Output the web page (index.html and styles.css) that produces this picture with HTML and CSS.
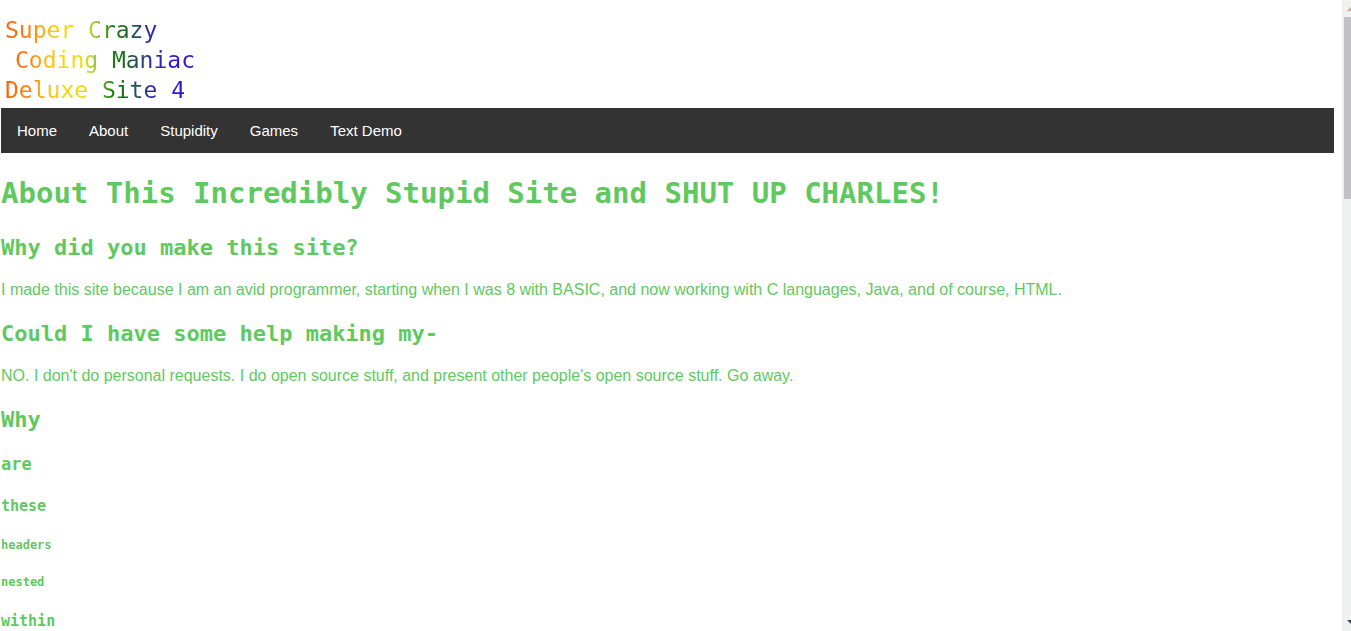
FILE: index.html
```html
<!DOCTYPE html>
<html lang="en">
<head>
<meta charset="utf-8">
<title>Super Crazy Coding Maniac Deluxe Site 4</title>
<link rel="stylesheet" href="styles.css">
</head>
<body>
<div class="page">
  <header class="logo">
    <span class="logo-line">Super Crazy</span>
    <span class="logo-line logo-indent">Coding Maniac</span>
    <span class="logo-line">Deluxe Site 4</span>
  </header>
  <nav class="nav">
    <a href="#home">Home</a>
    <a href="#about">About</a>
    <a href="#stupidity">Stupidity</a>
    <a href="#games">Games</a>
    <a href="#text">Text Demo</a>
  </nav>
  <main class="content">
    <h1>About This Incredibly Stupid Site and SHUT UP CHARLES!</h1>
    <h2>Why did you make this site?</h2>
    <p>I made this site because I am an avid programmer, starting when I was 8 with BASIC, and now working with C languages, Java, and of course, HTML.</p>
    <h2>Could I have some help making my-</h2>
    <p>NO. I don't do personal requests. I do open source stuff, and present other people's open source stuff. Go away.</p>
    <h2>Why</h2>
    <h3>are</h3>
    <h4>these</h4>
    <h5>headers</h5>
    <h5>nested</h5>
    <h4>within</h4>
  </main>
</div>
<div class="scrollbar" aria-hidden="true">
  <svg class="arrow" width="9" height="17" viewBox="0 0 9 17"><path d="M5 11L9 7V11Z" fill="#cda591"/></svg>
  <div class="thumb"></div>
  <svg class="arrow arrow-down" width="9" height="17" viewBox="0 0 9 17"><path d="M5 6H9V10Z" fill="#2f4858"/></svg>
</div>
</body>
</html>
```
FILE: styles.css
```css
body {
  margin: 0;
  display: flex;
  height: 100vh;
  overflow: hidden;
  background: #fff;
  color: #5fc95f;
  font-family: "Liberation Sans", Arial, sans-serif;
  font-size: 16px;
  line-height: 18px;
}

.page {
  flex: 1;
  min-width: 0;
  padding: 0 8px 0 1px;
}

.logo {
  display: flex;
  flex-direction: column;
  align-items: flex-start;
  width: 200px;
  padding: 15px 0 3px;
  color: transparent;
  background: linear-gradient(to right, #f4600c 0, #ff7e14 28px, #f8bc14 46px, #f4d80c 62px, #e8dc10 84px, #98c83c 94px, #1c7c10 112px, #186820 124px, #28486c 138px, #2c28b0 152px, #3018cc 172px);
  background-clip: text;
  -webkit-background-clip: text;
  font-family: "DejaVu Sans Mono", Consolas, monospace;
  font-size: 23px;
  line-height: 30px;
  white-space: nowrap;
}

.logo-line {
  padding-left: 4px;
}

.logo-indent {
  padding-left: 14px;
}

.nav {
  display: flex;
  background: #333;
}

.nav a {
  padding: 14px 16px;
  color: #fff;
  font-size: 15px;
  line-height: 17px;
  text-decoration: none;
}

h1, h2, h3, h4, h5 {
  font-family: "DejaVu Sans Mono", Consolas, monospace;
  font-weight: bold;
}

h1 {
  margin: 21px 0 22px;
  font-size: 29px;
  line-height: 38px;
}

h2 {
  margin: 21px 0 19px;
  font-size: 22px;
  line-height: 28px;
}

p {
  margin: 19px 0 21px;
}

h3 {
  margin: 18px 0 22px;
  font-size: 17px;
  line-height: 22px;
}

h4 {
  margin: 21px 0;
  font-size: 15px;
  line-height: 19px;
}

h5 {
  margin: 22px 0;
  font-size: 12px;
  line-height: 15px;
}

.scrollbar {
  display: flex;
  flex-direction: column;
  width: 9px;
  background: #eef1f0;
}

.thumb {
  height: 182px;
  margin-left: 2px;
  background: #c1c1c3;
}

.arrow {
  display: block;
  flex: none;
}

.arrow-down {
  margin-top: auto;
}
```
